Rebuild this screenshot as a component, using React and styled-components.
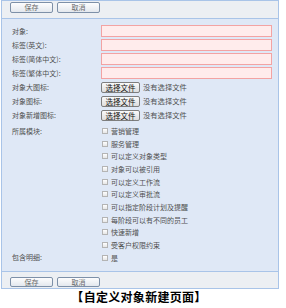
import React from "react";
import styled, { createGlobalStyle } from "styled-components";

const Global = createGlobalStyle`
  html, body { margin: 0; padding: 0; background: #fff; }
  body { font-family: "Noto Sans CJK SC", "Noto Sans", sans-serif; }
`;

const Page = styled.div`
  width: 286px;
  height: 308px;
  overflow: hidden;
`;

const Panel = styled.div`
  margin-left: 1px;
  width: 278px;
  box-sizing: border-box;
  border: 1px solid #a9c4e8;
  border-bottom: none;
  background: #dfe8f6;
  display: flex;
  flex-direction: column;
`;

const Toolbar = styled.div`
  display: flex;
  gap: 4px;
  padding: ${(p) => p.$pad};
  height: ${(p) => p.$h}px;
  box-sizing: border-box;
  background: #eceff3;
  border-${(p) => (p.$bottom ? "top" : "bottom")}: 1px solid #a9c4e8;
  ${(p) => (p.$bottom ? "border-bottom: 1px solid #a9c4e8;" : "")}
`;

const ToolButton = styled.button`
  width: 43px;
  height: ${(p) => p.$h}px;
  padding: 0;
  box-sizing: border-box;
  border: 1px solid #7d90a8;
  border-radius: 2px;
  background: linear-gradient(#fdfdfe, #e3e8ee);
  color: #6a6a6a;
  font-family: "Noto Sans CJK SC", sans-serif;
  font-size: 7px;
  line-height: 1;
  display: flex;
  align-items: center;
  justify-content: center;
`;

const Form = styled.div`
  display: grid;
  grid-template-columns: 89px 1fr;
  align-content: start;
  row-gap: 2px;
  padding: 6px 0 0 10px;
  height: 252px;
  box-sizing: border-box;
`;

const Label = styled.div`
  font-size: 7px;
  color: #505050;
  height: ${(p) => p.$h || 12}px;
  line-height: ${(p) => p.$lh || 12}px;
  white-space: nowrap;
  margin-top: ${(p) => p.$mt || 0}px;
`;

const TextInput = styled.div`
  width: 171px;
  height: 12px;
  box-sizing: border-box;
  border: 1px solid #f3a3a3;
  background: #ffecec;
`;

const FileRow = styled.div`
  display: flex;
  align-items: center;
  gap: 3px;
  height: 12px;
`;

const FileButton = styled.div`
  width: 39px;
  height: 11px;
  box-sizing: border-box;
  border: 1px solid #7e7e7e;
  border-radius: 2px;
  background: linear-gradient(#fafafa, #dedede);
  color: #111;
  font-size: 7.5px;
  display: flex;
  align-items: center;
  justify-content: center;
`;

const NoFile = styled.span`
  font-size: 7.3px;
  color: #505050;
`;

const CheckList = styled.div`
  display: flex;
  flex-direction: column;
  margin-top: ${(p) => p.$mt || 0}px;
`;

const CheckItem = styled.div`
  display: flex;
  align-items: center;
  gap: 3px;
  height: 12.7px;
  font-size: 7px;
  color: #505050;
  white-space: nowrap;
`;

const Box = styled.span`
  width: 6px;
  height: 6px;
  margin-left: 1px;
  box-sizing: border-box;
  border: 1px solid #b4b4b4;
  background: linear-gradient(#ffffff, #e6e6e6);
`;

const Caption = styled.div`
  text-align: center;
  width: 278px;
  margin-top: 1px;
  font-family: "Noto Sans CJK SC", sans-serif;
  font-weight: 700;
  font-size: 12px;
  letter-spacing: 0.3px;
  line-height: 14px;
  color: #000;
`;

const modules = [
  "营销管理",
  "服务管理",
  "可以定义对象类型",
  "对象可以被引用",
  "可以定义工作流",
  "可以定义审批流",
  "可以指定阶段计划及提醒",
  "每阶段可以有不同的员工",
  "快速新增",
  "受客户权限约束",
];

const textFields = ["对象:", "标签(英文):", "标签(简体中文):", "标签(繁体中文):"];
const fileFields = ["对象大图标:", "对象图标:", "对象新增图标:"];

export default function App() {
  return (
    <Page>
      <Global />
      <Panel>
        <Toolbar $pad="1px 0 0 8px" $h={18}>
          <ToolButton $h={11}>保存</ToolButton>
          <ToolButton $h={11}>取消</ToolButton>
        </Toolbar>
        <Form>
          {textFields.map((t) => (
            <React.Fragment key={t}>
              <Label>{t}</Label>
              <TextInput />
            </React.Fragment>
          ))}
          {fileFields.map((t) => (
            <React.Fragment key={t}>
              <Label>{t}</Label>
              <FileRow>
                <FileButton>选择文件</FileButton>
                <NoFile>没有选择文件</NoFile>
              </FileRow>
            </React.Fragment>
          ))}
          <Label $mt={1.5} $h={12.7} $lh={12.7}>所属模块:</Label>
          <CheckList $mt={1.5}>
            {modules.map((m) => (
              <CheckItem key={m}>
                <Box />
                {m}
              </CheckItem>
            ))}
          </CheckList>
          <Label $h={12.7} $lh={12.7} $mt={-2}>包含明细:</Label>
          <CheckList $mt={-2}>
            <CheckItem>
              <Box />是
            </CheckItem>
          </CheckList>
        </Form>
        <Toolbar $pad="5px 0 0 8px" $h={18} $bottom>
          <ToolButton $h={10}>保存</ToolButton>
          <ToolButton $h={10}>取消</ToolButton>
        </Toolbar>
      </Panel>
      <Caption>【自定义对象新建页面】</Caption>
    </Page>
  );
}
